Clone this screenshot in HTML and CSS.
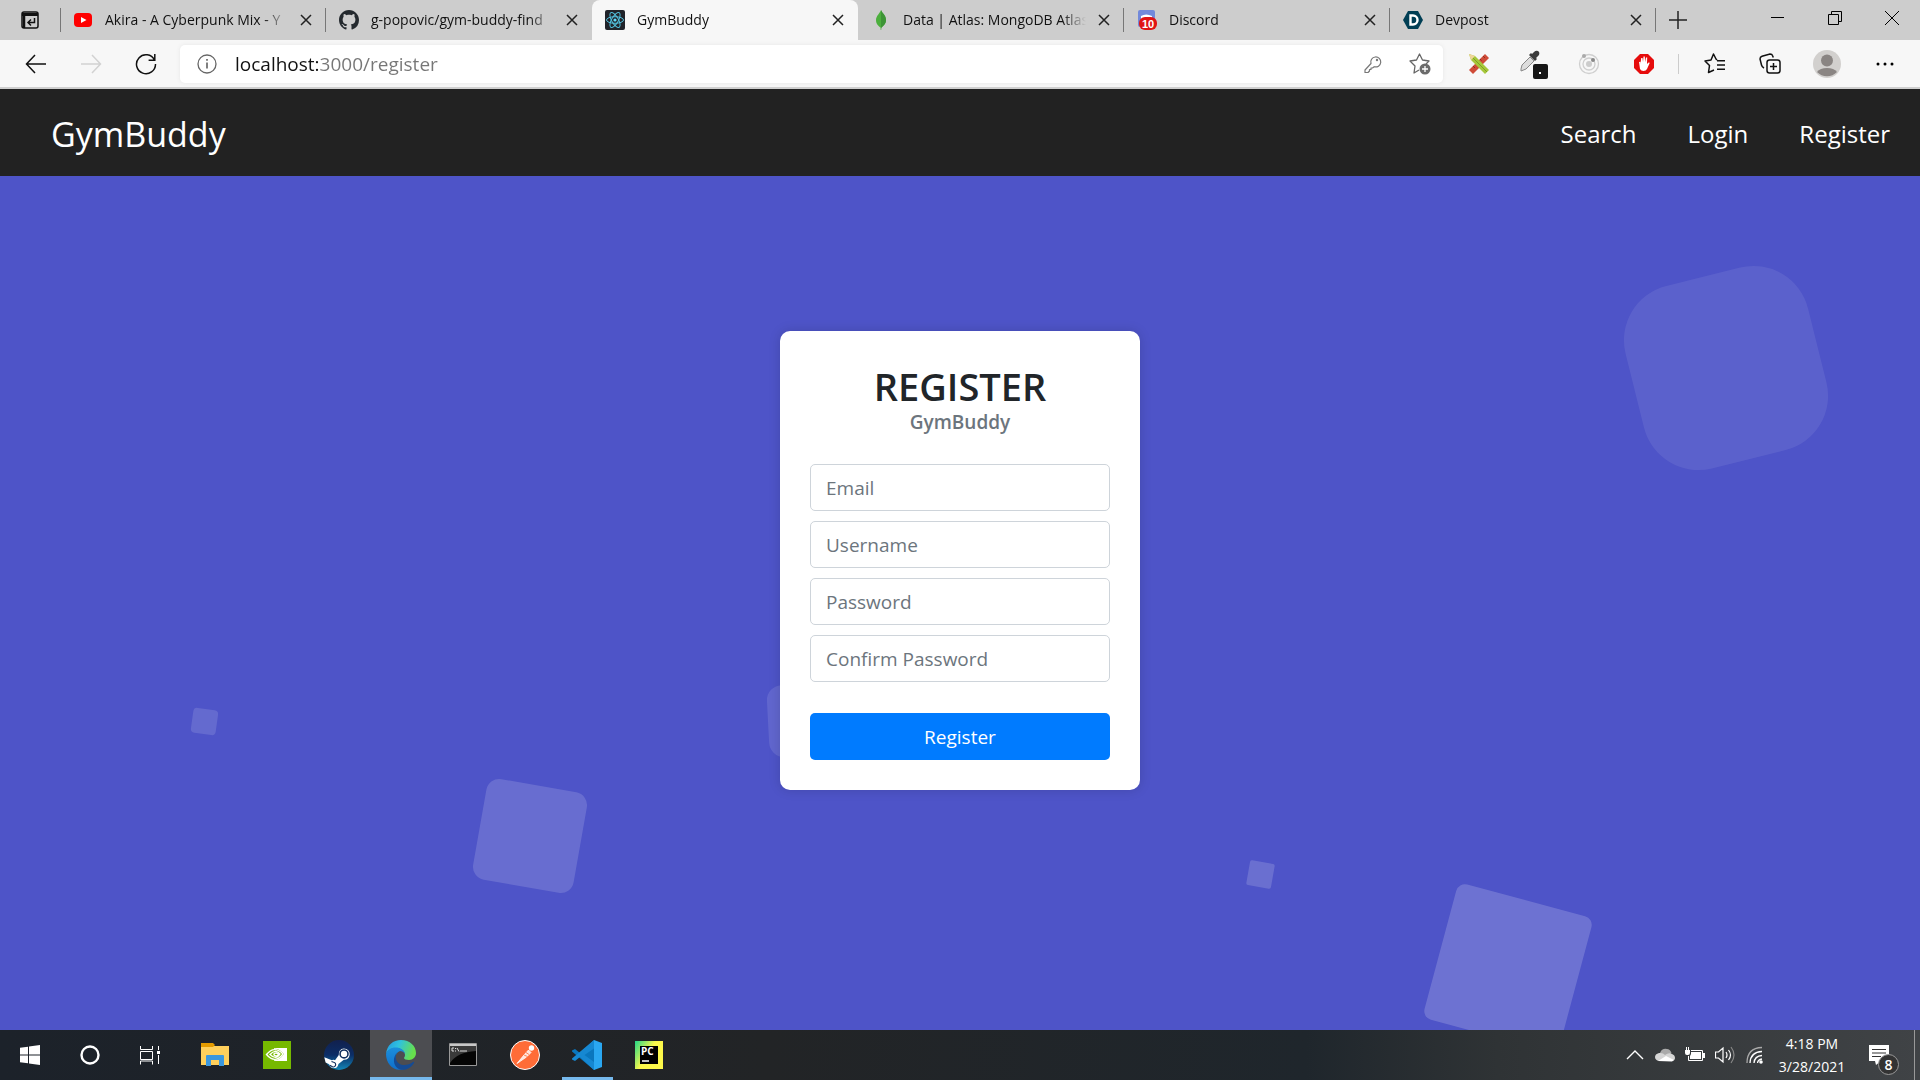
FILE: index.html
```html
<!DOCTYPE html>
<html lang="en">
<head>
<meta charset="utf-8">
<title>GymBuddy</title>
<link rel="stylesheet" href="styles.css">
</head>
<body>
<div class="tab-strip">
  <button class="tab-actions" aria-label="Tab actions">
    <svg width="20" height="20" viewBox="0 0 20 20"><rect x="2" y="2" width="16" height="16" rx="2" fill="none" stroke="#111" stroke-width="1.5"/><path d="M2 3h16v3H2z" fill="#111"/><path d="M4 3v15" stroke="#111" stroke-width="2.5"/><path d="M14.500 8v4.500H8.500M11 9.500l-3 3 3 3" fill="none" stroke="#111" stroke-width="1.500"/></svg>
  </button>
  <div class="tabs">
    <div class="tab">
      <svg class="favicon" viewBox="0 0 20 20"><rect x="1" y="3" width="18" height="14" rx="4" fill="#f00"/><path d="M8 7l5.500 3L8 13z" fill="#fff"/></svg>
      <span class="tab-title">Akira - A Cyberpunk Mix - Y</span>
      <button class="tab-close" aria-label="Close tab"><svg width="12" height="12" viewBox="0 0 12 12"><path d="M1 1l10 10M11 1L1 11"/></svg></button>
    </div>
    <div class="tab">
      <svg class="favicon" viewBox="0 0 16 16"><path fill="#24292e" d="M8 0C3.580 0 0 3.580 0 8c0 3.540 2.290 6.530 5.470 7.590.4.070.55-.17.55-.38 0-.19-.01-.82-.01-1.490-2.010.37-2.530-.49-2.690-.94-.09-.23-.48-.94-.82-1.130-.28-.15-.68-.52-.01-.53.63-.01 1.080.58 1.230.82.72 1.210 1.870.87 2.330.66.07-.52.28-.87.51-1.070-1.780-.2-3.640-.89-3.640-3.950 0-.87.31-1.590.82-2.150-.08-.2-.36-1.020.08-2.120 0 0 .67-.21 2.200.82.64-.18 1.320-.27 2-.27s1.360.09 2 .27c1.530-1.040 2.200-.82 2.200-.82.44 1.100.16 1.920.08 2.120.51.56.82 1.270.82 2.150 0 3.070-1.870 3.750-3.650 3.950.29.25.54.73.54 1.480 0 1.070-.01 1.930-.01 2.200 0 .21.15.46.55.38A8.010 8.010 0 0 0 16 8c0-4.420-3.580-8-8-8z"/></svg>
      <span class="tab-title">g-popovic/gym-buddy-find</span>
      <button class="tab-close" aria-label="Close tab"><svg width="12" height="12" viewBox="0 0 12 12"><path d="M1 1l10 10M11 1L1 11"/></svg></button>
    </div>
    <div class="tab tab-active">
      <svg class="favicon" viewBox="0 0 20 20"><rect width="20" height="20" rx="2" fill="#20232a"/><circle cx="10" cy="10" r="1.600" fill="#61dafb"/><g fill="none" stroke="#53c1de"><ellipse cx="10" cy="10" rx="8.500" ry="3.300"/><ellipse cx="10" cy="10" rx="8.500" ry="3.300" transform="rotate(60 10 10)"/><ellipse cx="10" cy="10" rx="8.500" ry="3.300" transform="rotate(120 10 10)"/></g></svg>
      <span class="tab-title">GymBuddy</span>
      <button class="tab-close" aria-label="Close tab"><svg width="12" height="12" viewBox="0 0 12 12"><path d="M1 1l10 10M11 1L1 11"/></svg></button>
    </div>
    <div class="tab">
      <svg class="favicon" viewBox="0 0 20 20"><path d="M10 0c1 3 5 5 5 10 0 4-3 6-4.500 7.500l-.3 2.500h-.5l-.2-2.500C7.500 16 5 14 5 10c0-4 4-7 5-10z" fill="#4caf3d"/><path d="M10 0c1 3 5 5 5 10 0 4-3 6-4.500 7.500L10 18z" fill="#3d9436"/></svg>
      <span class="tab-title">Data | Atlas: MongoDB Atlas</span>
      <button class="tab-close" aria-label="Close tab"><svg width="12" height="12" viewBox="0 0 12 12"><path d="M1 1l10 10M11 1L1 11"/></svg></button>
    </div>
    <div class="tab">
      <svg class="favicon" viewBox="0 0 20 20"><path d="M3 0h13q2 0 2 2v15H3q-2 0-2-2V2q0-2 2-2z" fill="#7289da"/><path d="M4 6q5-3 11 0v6H4z" fill="#fff"/><rect x="2" y="7" width="18" height="13" rx="6" fill="#e01414"/><text x="11" y="18" text-anchor="middle" class="favicon-count">10</text></svg>
      <span class="tab-title">Discord</span>
      <button class="tab-close" aria-label="Close tab"><svg width="12" height="12" viewBox="0 0 12 12"><path d="M1 1l10 10M11 1L1 11"/></svg></button>
    </div>
    <div class="tab">
      <svg class="favicon" viewBox="0 0 20 20"><path d="M5 1h10l5 9-5 9H5l-5-9z" fill="#003e54"/><path d="M7.500 5.500h2.500a4.500 4.500 0 0 1 0 9H7.500z" fill="none" stroke="#fff" stroke-width="2.400"/></svg>
      <span class="tab-title">Devpost</span>
      <button class="tab-close" aria-label="Close tab"><svg width="12" height="12" viewBox="0 0 12 12"><path d="M1 1l10 10M11 1L1 11"/></svg></button>
    </div>
  </div>
  <button class="new-tab" aria-label="New tab"><svg width="18" height="18" viewBox="0 0 18 18"><path d="M9 0v18M0 9h18" stroke="#222" stroke-width="1.500"/></svg></button>
  <div class="window-controls">
    <button aria-label="Minimize"><svg width="14" height="14" viewBox="0 0 14 14"><path d="M0 6.500h13" stroke="#000"/></svg></button>
    <button aria-label="Restore"><svg width="14" height="14" viewBox="0 0 14 14"><path d="M.5 3.500h10v10H.5zM3.500 3V.5h10v10H11" fill="none" stroke="#000"/></svg></button>
    <button aria-label="Close"><svg width="14" height="14" viewBox="0 0 14 14"><path d="M0 0l14 14M14 0L0 14" stroke="#000"/></svg></button>
  </div>
</div>

<div class="toolbar">
  <div class="toolbar-nav">
    <button aria-label="Back"><svg width="22" height="20" viewBox="0 0 22 20"><path d="M21 10H1.500M10 1L1.500 10l8.500 9" fill="none" stroke="#111" stroke-width="1.500"/></svg></button>
    <button aria-label="Forward" disabled><svg width="22" height="20" viewBox="0 0 22 20"><path d="M1 10h19.500M12 1l8.500 9-8.500 9" fill="none" stroke="#d2d2d2" stroke-width="1.500"/></svg></button>
    <button aria-label="Refresh"><svg width="22" height="22" viewBox="0 0 22 22"><path d="M19.500 7A9.500 9.500 0 1 0 20.500 11M19.800 1v6.200h-6.200" fill="none" stroke="#111" stroke-width="1.500"/></svg></button>
  </div>
  <div class="address">
    <svg width="20" height="20" viewBox="0 0 20 20"><circle cx="10" cy="10" r="9" fill="none" stroke="#666" stroke-width="1.300"/><path d="M10 8.500v6M10 5v1.800" stroke="#555" stroke-width="1.500"/></svg>
    <input class="address-input" type="text" aria-label="Address" value="localhost:3000/register">
    <button aria-label="Saved passwords"><svg width="20" height="20" viewBox="0 0 20 20"><path d="M8 9.500a5 5 0 1 1 3.200 3.200L9.500 14H8v1.500H6.500V17L5 18.500H2V16z" fill="none" stroke="#777" stroke-width="1.200" stroke-linejoin="round"/><circle cx="14" cy="6" r="1.200" fill="#777"/></svg></button>
    <button aria-label="Add to favorites"><svg width="24" height="24" viewBox="0 0 24 24"><path d="M11 18l-5 3 1-7-5-5 6.500-1L11.500 2l3 6 6.500 1-3 3" fill="none" stroke="#666" stroke-width="1.300" stroke-linejoin="round"/><circle cx="17" cy="17" r="5.500" fill="#6b6b6b"/><path d="M17 14v6M14 17h6" stroke="#fff" stroke-width="1.300"/></svg></button>
  </div>
  <div class="extensions">
    <button aria-label="Design tools"><svg width="22" height="22" viewBox="0 0 22 22"><path d="M17 1l4 4L5 21l-4-4z" fill="#cf4b38"/><path d="M15 3l2 2M12 6l1.500 1.500M5 13l2 2" stroke="#8f2e22"/><path d="M1 1l6 2 14 14-4 4L3 7z" fill="#a6c73a"/><path d="M1 1l6 2-4 4z" fill="#efd59a"/><path d="M5 5l14 14" stroke="#7da025"/></svg></button>
    <button aria-label="Color picker"><svg width="30" height="30" viewBox="0 0 30 30"><path d="M2 20l1-4 8-8 4 4-8 8-5 2z" fill="#ddd" stroke="#888"/><path d="M10 6l6 6 2-2-1-1 3-3q1-3-1-4t-4 1l-2 2-1-1z" fill="#3b3b3b"/><rect x="14" y="15" width="15" height="15" rx="2" fill="#161616"/><path d="M20 23h2v2h-2z" fill="#fff"/></svg></button>
    <button aria-label="Radar"><svg width="22" height="22" viewBox="0 0 22 22"><g fill="none" stroke="#cfcfcf" stroke-width="1.300"><circle cx="11" cy="11" r="9.500"/><circle cx="11" cy="11" r="6"/></g><circle cx="11" cy="11" r="3" fill="#ccc"/><circle cx="6" cy="3" r="2" fill="#aaa"/><circle cx="15" cy="7" r="2" fill="#888"/></svg></button>
    <button aria-label="Ad blocker"><svg width="22" height="22" viewBox="0 0 22 22"><path d="M7 1h8l6 6v8l-6 6H7l-6-6V7z" fill="#e60c0c"/><path d="M6 9l1.500-.3V11l.7-6h1.300l.5 4 .5-5.500h1.300l.3 5.500.9-4.500h1.200L14 11l1.500-1.500 1.300.3L14 16q-1 2-3.500 2T7 16z" fill="#fff"/></svg></button>
  </div>
  <div class="browser-actions">
    <button aria-label="Favorites"><svg width="22" height="22" viewBox="0 0 22 22"><path d="M13 7l-1-1-2.500-5L7 7 1 8l4.500 4.500-1 7L10 17M13 7.800h8M13 12h8M13 16.200h8" fill="none" stroke="#111" stroke-width="1.500" stroke-linejoin="round"/></svg></button>
    <button aria-label="Collections"><svg width="22" height="22" viewBox="0 0 22 22"><rect x="8" y="7" width="13" height="13" rx="2.500" fill="none" stroke="#111" stroke-width="1.500"/><path d="M14.500 10v7M11 13.500h7M5 15q-2-1-2.500-3L1 6q0-2 2-2.700L11 1q2 0 2.500 1.500l.8 2" fill="none" stroke="#111" stroke-width="1.500"/></svg></button>
    <button class="profile" aria-label="Profile"><svg width="28" height="28" viewBox="0 0 28 28"><circle cx="14" cy="14" r="14" fill="#d2d0ce"/><circle cx="14" cy="10.500" r="6" fill="#8a8583"/><path d="M4 22q3-4 10-4t10 4a14 14 0 0 1-20 0z" fill="#8a8583"/></svg></button>
    <button aria-label="Settings and more"><svg width="18" height="18" viewBox="0 0 18 18"><circle cx="2" cy="9" r="1.500"/><circle cx="9" cy="9" r="1.500"/><circle cx="16" cy="9" r="1.500"/></svg></button>
  </div>
</div>

<header class="site-header">
  <a class="brand" href="#">GymBuddy</a>
  <nav class="site-nav">
    <a href="#">Search</a>
    <a href="#">Login</a>
    <a href="#">Register</a>
  </nav>
</header>

<main class="page">
  <div class="square square-a"></div>
  <div class="square square-b"></div>
  <div class="square square-c"></div>
  <div class="square square-d"></div>
  <div class="square square-e"></div>
  <div class="square square-f"></div>
  <form class="card">
    <h1>REGISTER</h1>
    <h2>GymBuddy</h2>
    <div class="fields">
      <input class="field" type="email" placeholder="Email" aria-label="Email">
      <input class="field" type="text" placeholder="Username" aria-label="Username">
      <input class="field" type="password" placeholder="Password" aria-label="Password">
      <input class="field" type="password" placeholder="Confirm Password" aria-label="Confirm Password">
    </div>
    <button class="submit" type="button">Register</button>
  </form>
</main>

<footer class="taskbar">
  <div class="system-buttons">
    <button aria-label="Start"><svg width="20" height="20" viewBox="0 0 20 20"><path d="M0 2.800L8 1.700V9.500H0zM9 1.500L20 0v9.500H9zM0 10.500h8v7.800L0 17.200zM9 10.500h11V20L9 18.500z" fill="#fff"/></svg></button>
    <button aria-label="Cortana"><svg width="20" height="20" viewBox="0 0 20 20"><circle cx="10" cy="10" r="8.500" fill="none" stroke="#fff" stroke-width="2.400"/></svg></button>
    <button aria-label="Task view"><svg width="20" height="20" viewBox="0 0 20 20"><path d="M.5 1v3.500h12V1M.5 6.500h12v8H.5zM.5 19.500V16h12v3.500M18.500 1v4M18.500 10v9" fill="none" stroke="#fff"/><path d="M17 6h3v3h-3z" fill="#fff"/></svg></button>
  </div>
  <div class="apps">
    <button aria-label="File Explorer"><svg width="28" height="28" viewBox="0 0 28 28"><path d="M0 3h10l3 2h15v19H0z" fill="#ffd05c"/><path d="M0 2h12l2 2-2 2H0z" fill="#e49b00"/><path d="M5 25V15q0-1 1-1h16q1 0 1 1v10h-5v-6h-8v6z" fill="#3b97de"/></svg></button>
    <button aria-label="GeForce"><svg width="28" height="28" viewBox="0 0 28 28"><path d="M0 0h28v28H0z" fill="#76b900"/><path d="M11 7h13v13H11z" fill="#fff"/><path d="M3 14q8-12 18-1-9 12-18 1z" fill="#76b900"/><path d="M3.500 13.500q8-9.500 16.500-.5-8 10.500-16.500.5zm3.500 0q5.500-6 10-.5-4 6.500-10 .5zm3.500 0q2.500-3 5 0-2 3-5 0" fill="none" stroke="#fff" stroke-width="1.400"/></svg></button>
    <button aria-label="Steam"><svg width="30" height="30" viewBox="0 0 28 28"><defs><linearGradient id="steam" x2="0" y2="1"><stop stop-color="#12204d"/><stop offset=".5" stop-color="#0b2d66"/><stop offset="1" stop-color="#1387b8"/></linearGradient></defs><circle cx="14" cy="14" r="14" fill="url(#steam)"/><path d="M.3 16.200l7 2.800q1.500-1 3 0l3.500-5q-.3-5.500 4.700-6 5.500.5 5.500 5.500-.5 5-5.500 5l-5 3.800q-.7 4-4.500 3.900-3.500-.2-4.200-3.500L1.500 21z" fill="#fff"/><circle cx="18.700" cy="13" r="3.700" fill="#fff" stroke="#12305f" stroke-width="1.500"/><path d="M7 20l2 .8a2.200 2.200 0 1 1-2 3.600l-1.700-.7" fill="none" stroke="#12305f" stroke-width="1.100"/></svg></button>
    <button class="app-active" aria-label="Microsoft Edge"><svg width="30" height="30" viewBox="0 0 30 30"><defs><linearGradient id="edge-a" x2="1" y2=".3"><stop stop-color="#2396e0"/><stop offset=".45" stop-color="#2fc1df"/><stop offset="1" stop-color="#67e04c"/></linearGradient><linearGradient id="edge-b" x2="0" y2="1"><stop stop-color="#1b8fdc"/><stop offset="1" stop-color="#0f6fcb"/></linearGradient></defs><path d="M0 14C1 5 7 0 15 0c9 0 15 6 15 13 0 4-3 7-7 7-3 0-5-1-5-2 0-1 1-1 1-3 0-4-4-7-9-7-5 0-9 3-10 6z" fill="url(#edge-a)"/><path d="M0 14c1-4 5-6.500 9.500-6.500 5 0 9 2.500 9.500 6.500-1-2-3-3-5-3-3 1-5.500 5-4.500 9 1 5 5 8 8.500 9-10 3.500-18-5-18-15z" fill="url(#edge-b)"/><path d="M11.500 12c-3 4-2 9 1.500 11.500s10 2 14-1.500c1-.5 1.500 0 1 1-3 5-8 7.500-13 6.700C8 28 5 19 11.500 12z" fill="#154b94"/></svg></button>
    <button aria-label="Command Prompt"><svg width="28" height="24" viewBox="0 0 28 24"><path d="M.5.500h27v22H.5z" fill="#050505" stroke="#999"/><path d="M1 1h26v2H1z" fill="#c8c8c8"/><path d="M1 3h26v5Q8 9 1 20z" fill="#3a3a3a"/><path d="M5 5h-2v3h2M6.500 5v1M6.500 7.500v1M8 5l2 3.500M11 8h7" fill="none" stroke="#ddd"/></svg></button>
    <button aria-label="Postman"><svg width="30" height="30" viewBox="0 0 30 30"><circle cx="15" cy="15" r="14.500" fill="#ff6c37" stroke="#fff"/><path d="M7 23.500l7-8.500 4.500-5 2.500 2.500-4.500 4.500z" fill="#ffe5db" stroke="#fff" stroke-width=".8" stroke-linejoin="round"/><path d="M14 15l3.500 1.500M16 12.500l3 2" stroke="#ff6c37" stroke-width=".8"/><circle cx="21.500" cy="8" r="2.700" fill="#fff"/></svg></button>
    <button class="app-running" aria-label="Visual Studio Code"><svg width="30" height="30" viewBox="0 0 30 30"><path d="M22 0L8 13 3 9 0 10.500v1L22 30l3-3V8z" fill="#0a76bd"/><path d="M22 30L8 17l-5 4-3-1.500v-1L22 0v8.500L12.500 15l9.500 7z" fill="#1688d2"/><path d="M22 0l8 3v24l-8 3z" fill="#2aa7f1"/></svg></button>
    <button aria-label="PyCharm"><svg width="28" height="28" viewBox="0 0 28 28"><defs><linearGradient id="pycharm" x2="1" y2=".6"><stop stop-color="#21d789"/><stop offset=".55" stop-color="#fcf84a"/></linearGradient></defs><path d="M0 0h28v28H0z" fill="url(#pycharm)"/><path d="M5 5h18v18H5z" fill="#000"/><path d="M7 20h7" stroke="#fff" stroke-width="1.500"/><text x="6" y="14" class="app-label">PC</text></svg></button>
  </div>
  <div class="tray">
    <button aria-label="Show hidden icons"><svg width="18" height="18" viewBox="0 0 18 18"><path d="M1 13l8-8 8 8" fill="none" stroke="#fff" stroke-width="1.400"/></svg></button>
    <button aria-label="OneDrive"><svg width="20" height="20" viewBox="0 0 20 20"><path d="M5 8q2-5 7-4 3 0 4.500 4l-3 3-9 3z" fill="#aaa"/><path d="M4 16q-4-1-4-4t4-4q4-.5 6 2 4-3 7-1 3 1 3 4t-4 3z" fill="#d5d5d5"/><path d="M3 16l8-5 8 4-2 1.500z" fill="#fff"/></svg></button>
    <button aria-label="Battery"><svg width="20" height="16" viewBox="0 0 20 16"><path d="M6 3.500h11.500v10H3.500V9" fill="none" stroke="#fff"/><path d="M6 5h10v7H5V9l1-2zM18 6h2v5h-2zM0 3h5v3q0 2-2 2H2q-2 0-2-2zM1 0h1v3H1zM3 0h1v3H3z" fill="#fff"/></svg></button>
    <button aria-label="Volume"><svg width="20" height="18" viewBox="0 0 20 18"><path d="M.5 6h3L8 2v14l-4.500-4h-3zM11 6q2 3 0 6M13.500 4q4 5 0 10" fill="none" stroke="#fff" stroke-width="1.200"/><path d="M16 1q6 8 0 16" fill="none" stroke="#888" stroke-width="1.200"/></svg></button>
    <button aria-label="Network"><svg width="18" height="18" viewBox="0 0 18 18"><path d="M1 17Q1 2 16 1.500" fill="none" stroke="#aaa" stroke-width="1.300"/><path d="M4 17Q4.500 6 16 5.500M8 17q.5-7 8-7.500M11.500 17q.5-3.500 4.500-4" fill="none" stroke="#fff" stroke-width="1.300"/><circle cx="15" cy="16" r="1.800" fill="#fff"/></svg></button>
  </div>
  <time class="clock" datetime="2021-03-28T16:18"><span>4:18 PM</span><span>3/28/2021</span></time>
  <button class="notifications" aria-label="Notifications">
    <svg width="20" height="20" viewBox="0 0 20 20"><path d="M0 0h20v16h-8l-5 4-1-4H0z" fill="#fff"/><path d="M3 4.500h14M3 8h14M3 11.500h9" stroke="#333"/></svg>
    <span class="badge">8</span>
  </button>
  <button class="show-desktop" aria-label="Show desktop"></button>
</footer>
</body>
</html>
```
FILE: styles.css
```css
* {
  box-sizing: border-box;
}

body {
  margin: 0;
  min-height: 100vh;
  display: flex;
  flex-direction: column;
  font-family: "Open Sans", "Noto Sans", sans-serif;
  color: #212529;
}

button {
  display: flex;
  align-items: center;
  justify-content: center;
  padding: 0;
  border: 0;
  background: none;
  font: inherit;
  color: inherit;
}

input {
  font: inherit;
}

a {
  color: inherit;
  text-decoration: none;
}

svg {
  flex: none;
}

/* Browser tabs */
.tab-strip {
  display: flex;
  height: 40px;
  background: #cdcdcd;
  color: #111;
}

.tab-actions {
  width: 60px;
}

.tabs {
  flex: 1;
  display: flex;
  min-width: 0;
}

.tab {
  flex: 1;
  min-width: 0;
  display: flex;
  align-items: center;
  gap: 12px;
  padding: 0 14px 0 13px;
  background: linear-gradient(#777, #777) right / 1px 24px no-repeat;
}

.tab:nth-child(2) {
  background: none;
}

.tab:first-child {
  background:
    linear-gradient(#777, #777) left / 1px 24px no-repeat,
    linear-gradient(#777, #777) right / 1px 24px no-repeat;
}

.tab.tab-active {
  background: #f7f7f7;
  border-radius: 8px 8px 0 0;
}

.favicon {
  width: 20px;
  height: 20px;
}

.favicon-count {
  font: bold 11px "Liberation Sans", sans-serif;
  fill: #fff;
}

.tab-title {
  flex: 1;
  overflow: hidden;
  white-space: nowrap;
  font-size: 14px;
  line-height: 20px;
  mask-image: linear-gradient(90deg, #000 calc(100% - 24px), transparent);
}

.tab-close {
  width: 12px;
  height: 20px;
}

.tab-close path {
  stroke: #222;
  stroke-width: 1.5;
}

.new-tab {
  width: 44px;
}

.window-controls {
  display: flex;
  padding-left: 49px;
}

.window-controls button {
  width: 57px;
  height: 36px;
}

/* Browser toolbar */
.toolbar {
  display: flex;
  align-items: center;
  height: 49px;
  padding: 0 8px;
  background: #f7f7f7;
  border-bottom: 2px solid #cfcfcf;
}

.toolbar button {
  width: 55px;
  height: 40px;
}

.toolbar .profile {
  width: 60px;
}

.toolbar-nav {
  display: flex;
  margin-right: 7px;
}

.address {
  flex: 1;
  display: flex;
  align-items: center;
  height: 38px;
  padding-left: 17px;
  background: #fff;
  border-radius: 5px;
  box-shadow: 0 0 4px #e6e6e6;
}

.address button {
  width: 47px;
}

.address-input {
  flex: 1;
  min-width: 0;
  margin-left: 18px;
  padding: 0;
  border: 0;
  outline: 0;
  font-size: 19px;
  background: linear-gradient(90deg, #111 83px, #767676 83px);
  background-clip: text;
  -webkit-background-clip: text;
  color: transparent;
}

.extensions,
.browser-actions {
  display: flex;
  padding-left: 8px;
}

.extensions {
  padding-right: 8px;
  background: linear-gradient(#ccc, #ccc) right / 1px 20px no-repeat;
}

/* Site header */
.site-header {
  display: flex;
  align-items: center;
  justify-content: space-between;
  height: 87px;
  padding: 2px 30px 0 51px;
  background: #222;
  color: #fff;
}

.brand {
  font-size: 34px;
}

.site-nav {
  display: flex;
  gap: 51px;
  font-size: 24px;
}

/* Register page */
.page {
  position: relative;
  flex: 1;
  display: flex;
  align-items: center;
  justify-content: center;
  padding-bottom: 85px;
  overflow: hidden;
  background: #4e54c8;
}

.square {
  position: absolute;
}

.square-a {
  left: 192px;
  top: 533px;
  width: 25px;
  height: 25px;
  border-radius: 4px;
  background: rgba(255, 255, 255, 0.13);
  transform: rotate(8deg);
}

.square-b {
  left: 479px;
  top: 609px;
  width: 102px;
  height: 102px;
  border-radius: 13px;
  background: rgba(255, 255, 255, 0.15);
  transform: rotate(10deg);
}

.square-c {
  left: 1248px;
  top: 686px;
  width: 25px;
  height: 25px;
  border-radius: 2px;
  background: rgba(255, 255, 255, 0.16);
  transform: rotate(10deg);
}

.square-d {
  left: 1438px;
  top: 722px;
  width: 140px;
  height: 140px;
  border-radius: 9px;
  background: rgba(255, 255, 255, 0.18);
  transform: rotate(15deg);
}

.square-e {
  left: 1632px;
  top: 98px;
  width: 188px;
  height: 188px;
  border-radius: 56px;
  background: rgba(255, 255, 255, 0.08);
  transform: rotate(-14deg);
}

.square-f {
  left: 768px;
  top: 508px;
  width: 72px;
  height: 72px;
  border-radius: 15px;
  background: rgba(255, 255, 255, 0.11);
  transform: rotate(-3deg);
}

.card {
  position: relative;
  width: 360px;
  padding: 30px;
  border-radius: 10px;
  background: #fff;
  box-shadow: 0 0 12px rgba(0, 0, 0, 0.15);
  text-align: center;
}

.card h1 {
  margin: 0;
  font-size: 38px;
  font-weight: 600;
  line-height: 50px;
}

.card h2 {
  margin: 0;
  font-size: 19px;
  font-weight: 600;
  line-height: 22px;
  color: #6c757d;
}

.fields {
  display: flex;
  flex-direction: column;
  gap: 10px;
  margin: 31px 0;
}

.field {
  height: 47px;
  padding: 1px 15px 0;
  border: 1px solid #ced4da;
  border-radius: 5px;
  font-size: 19px;
  color: #495057;
}

.field::placeholder {
  color: #6c757d;
}

.submit {
  width: 100%;
  height: 47px;
  border-radius: 5px;
  background: #007bff;
  color: #fff;
  font-size: 19px;
}

/* Taskbar */
.taskbar {
  display: flex;
  height: 50px;
  background: linear-gradient(90deg, #1c222a, #222426 40%, #1f262c 68%, #2f3335 78%, #404346);
  color: #fff;
}

.system-buttons {
  display: flex;
  margin-right: 4px;
}

.system-buttons button {
  width: 60px;
}

.apps {
  flex: 1;
  display: flex;
}

.apps button {
  width: 62px;
}

.apps .app-active {
  background: linear-gradient(#76b9ed, #76b9ed) bottom / 100% 3px no-repeat #4c4d51;
}

.apps .app-running {
  background: linear-gradient(#76b9ed, #76b9ed) bottom / 51px 3px no-repeat;
}

.app-label {
  font: bold 10px "Open Sans", sans-serif;
  fill: #fff;
}

.tray {
  display: flex;
}

.tray button {
  width: 30px;
}

.clock {
  width: 84px;
  display: flex;
  flex-direction: column;
  justify-content: center;
  text-align: center;
  font-size: 14px;
  line-height: 23px;
}

.notifications {
  position: relative;
  width: 50px;
  margin-right: 10px;
}

.badge {
  position: absolute;
  left: 24px;
  top: 24px;
  width: 21px;
  height: 21px;
  border: 1px solid #999;
  border-radius: 50%;
  background: #333;
  font-size: 14px;
  font-weight: 600;
  line-height: 19px;
}

.show-desktop {
  width: 6px;
  border-left: 1px solid #999;
}
```
